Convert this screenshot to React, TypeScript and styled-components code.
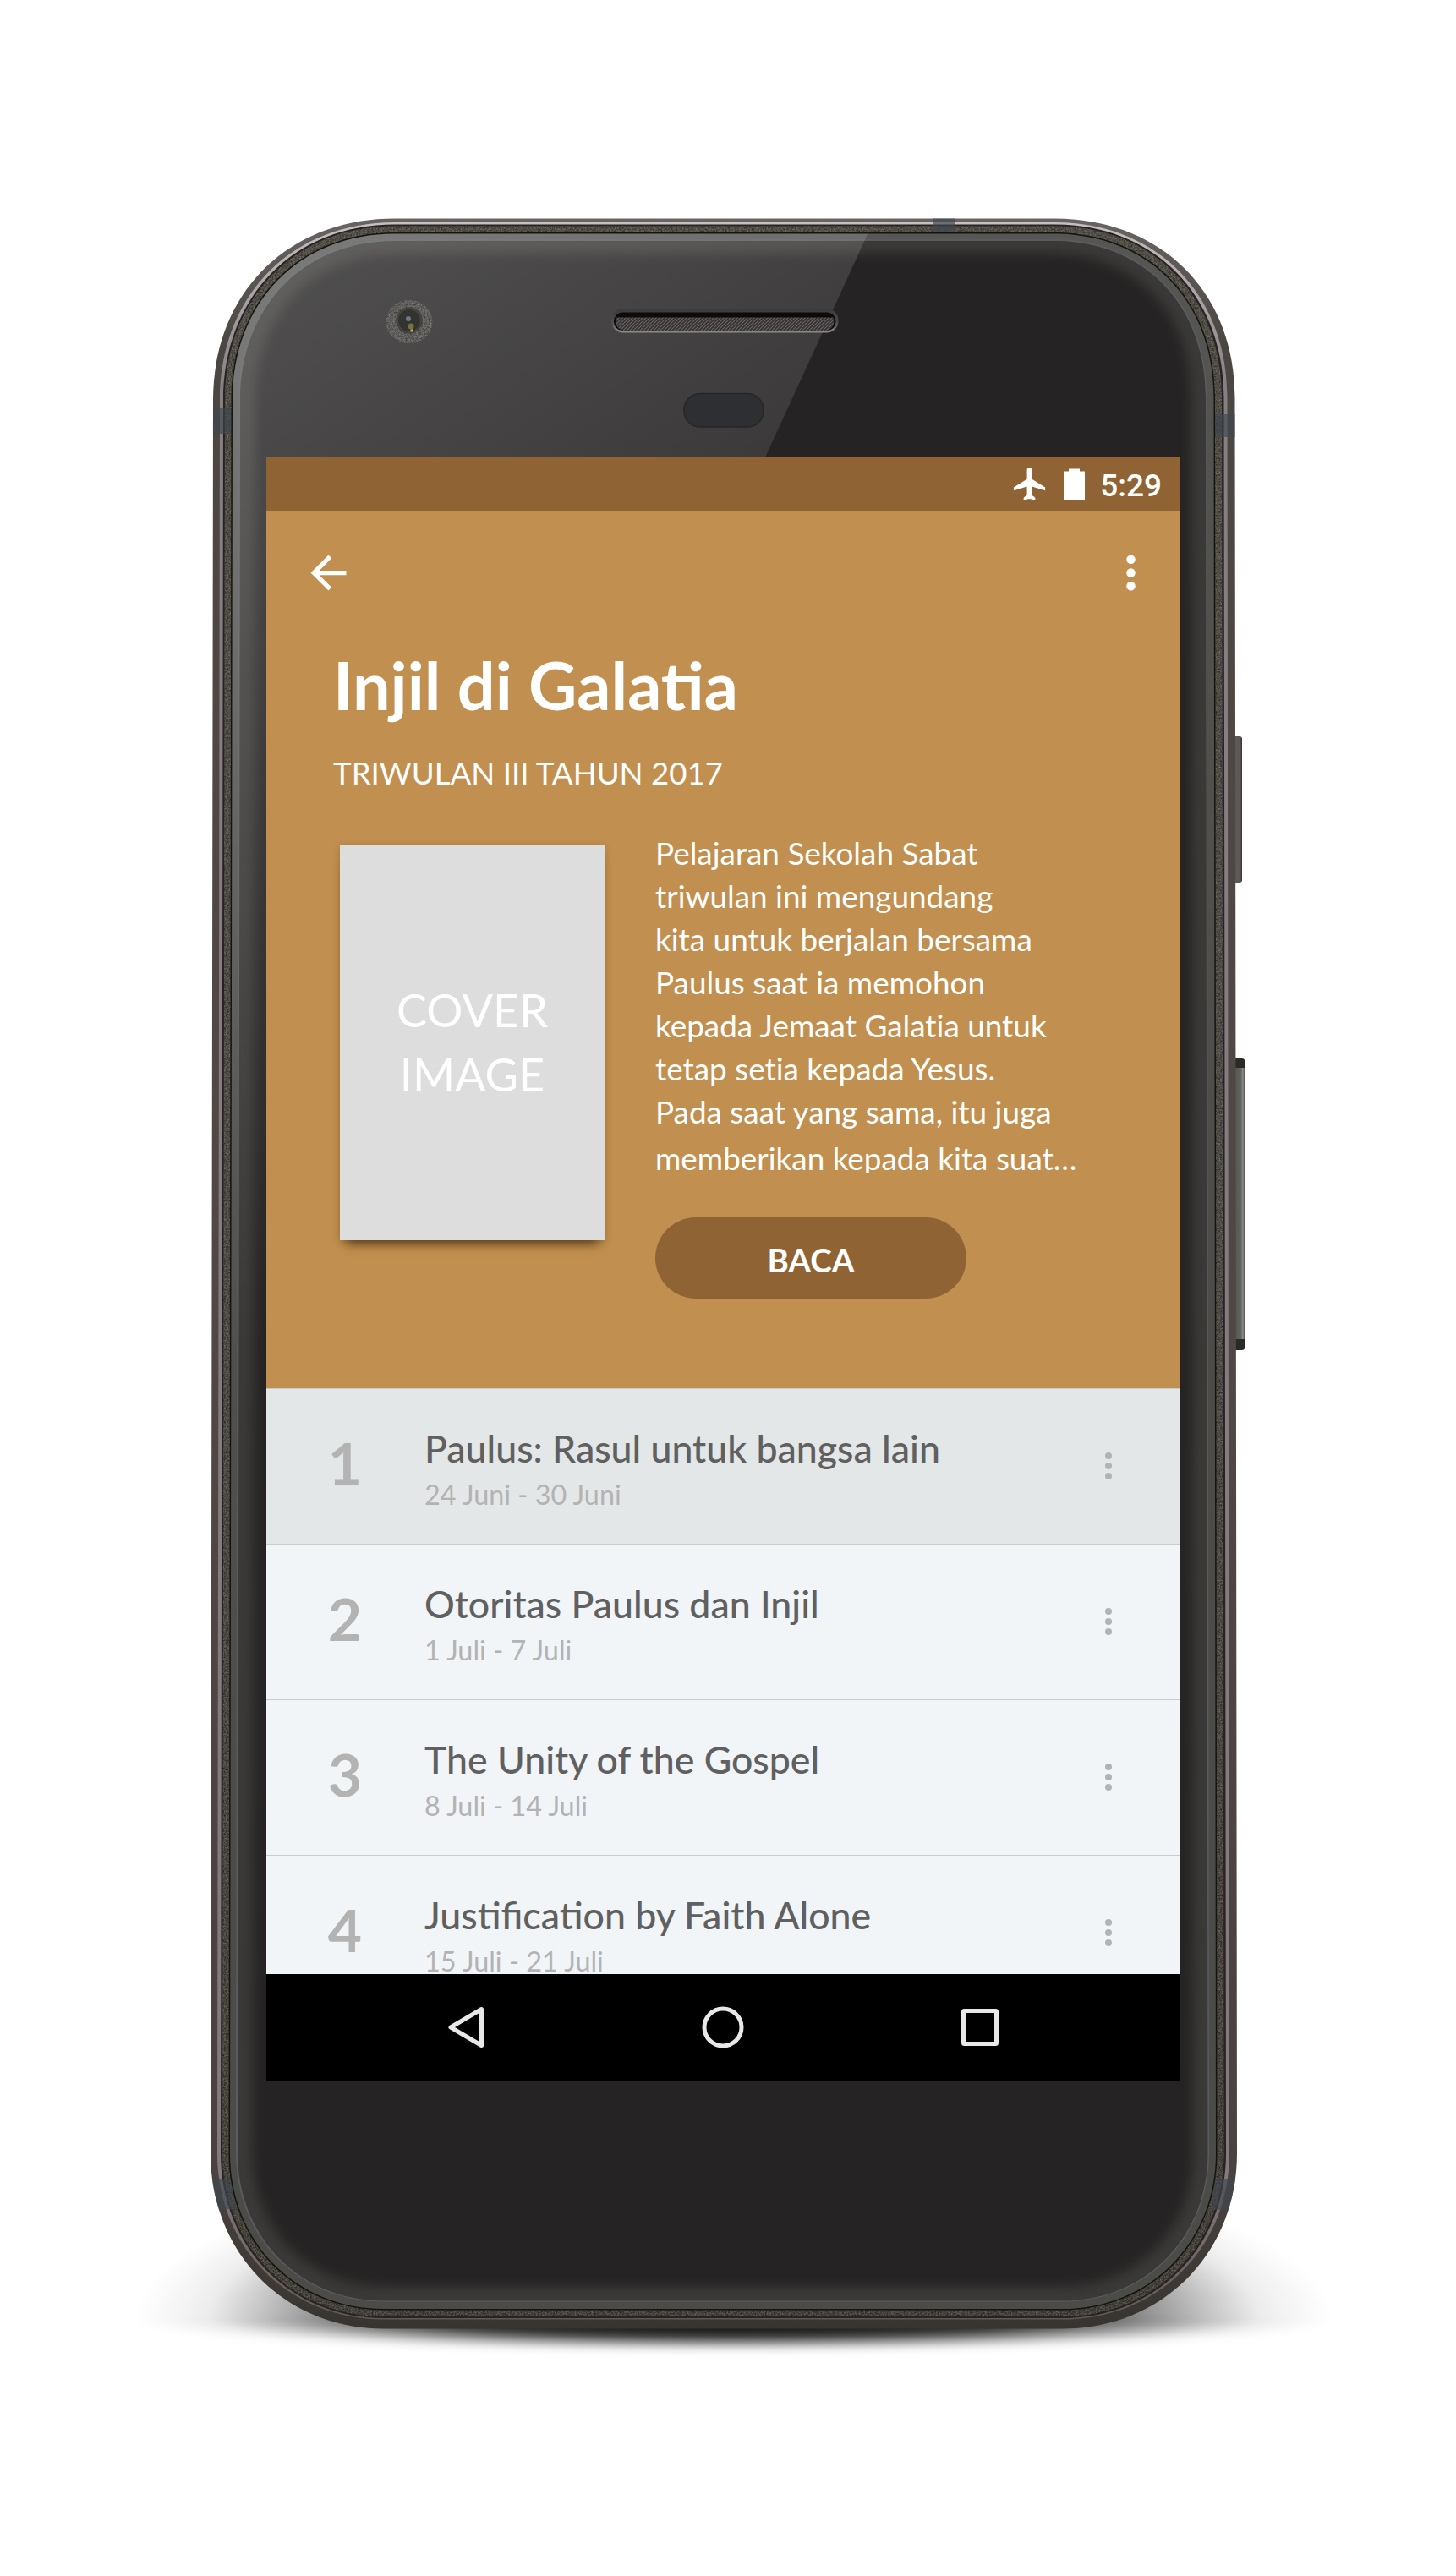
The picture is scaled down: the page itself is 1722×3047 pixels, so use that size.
import React from "react";
import styled, { createGlobalStyle } from "styled-components";

const GlobalStyle = createGlobalStyle`
  body {
    margin: 0;
    background: #ffffff;
  }
`;

const brand = {
  primary: "#c18f4f",
  dark: "#8f6334",
  row: "#f1f5f8",
  rowActive: "#e3e7e7",
  line: "#c9cccd",
  ink: "#606060",
  muted: "#b3b3b3",
};

/* ---------- Page and device ---------- */

const Page = styled.main`
  display: grid;
  width: 1722px;
  height: 3047px;
  overflow: hidden;
  background: #ffffff;
  font-family: Lato, "Liberation Sans", sans-serif;
`;

const DeviceSvg = styled.svg`
  grid-area: 1 / 1;
  display: block;
  width: 1722px;
  height: 3047px;
`;

const Screen = styled.section`
  grid-area: 1 / 1;
  z-index: 1;
  display: flex;
  flex-direction: column;
  width: 1080px;
  height: 1920px;
  margin: 541px 0 0 315px;
  overflow: hidden;
  background: ${brand.row};
`;

/* ---------- Status bar ---------- */

const StatusBar = styled.div`
  box-sizing: border-box;
  flex: none;
  display: flex;
  align-items: center;
  justify-content: flex-end;
  height: 63px;
  padding-right: 21px;
  background: ${brand.dark};
  color: #ffffff;
`;

const StatusIcon = styled.svg<{ $gap: number }>`
  display: block;
  flex: none;
  margin-right: ${(p) => p.$gap}px;
  fill: #ffffff;
`;

const Clock = styled.span`
  font: 500 37px/40px Roboto, sans-serif;
  padding-top: 4px;
`;

/* ---------- Header ---------- */

const Header = styled.header`
  box-sizing: border-box;
  flex: none;
  height: 1038px;
  background: ${brand.primary};
  color: #ffffff;
`;

const Toolbar = styled.div`
  display: flex;
  align-items: center;
  justify-content: space-between;
  height: 147px;
  padding: 0 26px 0 42px;
`;

const Glyph = styled.svg<{ $size: number }>`
  display: block;
  flex: none;
  width: ${(p) => p.$size}px;
  height: ${(p) => p.$size}px;
  fill: currentColor;
`;

const Title = styled.h1`
  margin: 11px 0 0 79px;
  font-size: 79.2px;
  line-height: 95px;
  font-weight: 700;
`;

const Quarter = styled.p`
  margin: 35px 0 0 79px;
  font-size: 36.65px;
  line-height: 44px;
`;

const Intro = styled.div`
  display: flex;
  align-items: flex-start;
  margin-top: 48px;
  padding-left: 87px;
`;

const Cover = styled.div`
  flex: none;
  display: flex;
  flex-direction: column;
  align-items: center;
  justify-content: center;
  width: 313px;
  height: 468px;
  margin: 15px 60px 0 0;
  background: #dddddd;
  font-size: 54px;
  line-height: 76px;
  box-shadow: 0 12px 12px -8px rgba(60, 35, 5, 0.75), 0 2px 8px rgba(60, 35, 5, 0.22);
`;

const Details = styled.div`
  display: flex;
  flex-direction: column;
  align-items: flex-start;
`;

const Description = styled.div`
  height: 404px;
  overflow: hidden;
  white-space: nowrap;
  font-size: 36.9px;
  font-variant-ligatures: none;
`;

const Line = styled.div<{ $last?: boolean }>`
  line-height: ${(p) => (p.$last ? 59 : 51)}px;
`;

const ReadButton = styled.button`
  width: 368px;
  height: 96px;
  margin: 52px 0 0;
  padding: 3px 0 0;
  border: 0;
  border-radius: 48px;
  background: ${brand.dark};
  color: #ffffff;
  font: 700 38.6px/46px Lato, sans-serif;
`;

/* ---------- Lessons ---------- */

const Lessons = styled.ul`
  flex: 1;
  min-height: 0;
  margin: 0;
  padding: 0;
  overflow: hidden;
  list-style: none;
`;

const Lesson = styled.li<{ $active: boolean }>`
  box-sizing: border-box;
  display: flex;
  align-items: flex-start;
  height: 184px;
  padding: 0 60px 0 43px;
  border-top: 1px solid ${brand.line};
  background: ${(p) => (p.$active ? brand.rowActive : brand.row)};
`;

const LessonNumber = styled.span`
  width: 100px;
  margin: 47px 44px 0 0;
  color: ${brand.muted};
  font-size: 69.5px;
  line-height: 80px;
  font-weight: 700;
  text-align: center;
`;

const LessonText = styled.div`
  flex: 1;
  display: flex;
  flex-direction: column;
  gap: 10px;
  padding-top: 44px;
`;

const LessonTitle = styled.span`
  color: ${brand.ink};
  font-size: 44.65px;
  line-height: 52px;
  font-weight: 500;
`;

const LessonDate = styled.span`
  color: ${brand.muted};
  font-size: 32.4px;
  line-height: 38px;
`;

const LessonMenu = styled.span`
  margin-top: 67px;
  color: ${brand.muted};
`;

/* ---------- Navigation bar ---------- */

const NavBar = styled.nav`
  flex: none;
  display: flex;
  align-items: center;
  justify-content: center;
  gap: 240px;
  height: 126px;
  background: #000000;
`;

const NavIcon = styled.svg`
  display: block;
  width: 64px;
  height: 64px;
  fill: none;
  stroke: #e8e8e8;
  stroke-width: 5;
  stroke-linejoin: round;
`;

/* ---------- Device drawing ---------- */

type Insets = [left: number, top: number, right: number, bottom: number];

/* Closed outline of the body, pulled in by a distance on each side. */
function outline([l, t, r, b]: Insets): string {
  const k = 0.41;
  const top = 258.5 + t;
  const bottom = 2754.5 - b;
  const lt = 252 + l;
  const lb = 249 + l;
  const rt = 1460.5 - r;
  const rb = 1463 - r;
  const tl = { x: 467, y: 474 };
  const tr = { x: 1247, y: 470 };
  const br = { x: 1257, y: 2547 };
  const bl = { x: 454, y: 2547 };
  return [
    `M${tl.x} ${top} H${tr.x}`,
    `C${rt - (rt - tr.x) * k} ${top} ${rt} ${top + (tr.y - top) * k} ${rt} ${tr.y}`,
    `L${rb} ${br.y}`,
    `C${rb} ${bottom - (bottom - br.y) * 0.43} ${rb - (rb - br.x) * 0.43} ${bottom} ${br.x} ${bottom}`,
    `H${bl.x}`,
    `C${lb + (bl.x - lb) * 0.43} ${bottom} ${lb} ${bottom - (bottom - bl.y) * 0.43} ${lb} ${bl.y}`,
    `L${lt} ${tl.y}`,
    `C${lt} ${top + (tl.y - top) * k} ${lt + (tl.x - lt) * k} ${top} ${tl.x} ${top}Z`,
  ].join(" ");
}

const ring = {
  body: outline([0, 0, 0, 0]),
  shine: outline([8, 4.5, 9, 11]),
  shineEnd: outline([12, 7, 13, 12.5]),
  grain: outline([14, 9, 15.5, 14.5]),
  groove: outline([21.5, 16.5, 23.5, 22]),
  bezel: outline([23, 18, 25, 23.5]),
  bezelLine: outline([30, 24.5, 33, 32]),
  glass: outline([32, 26.5, 34.5, 33]),
  flat: outline([50, 42, 52, 50]),
};

const bands = [
  { x: 250, y: 483, w: 24, h: 30 },
  { x: 1436, y: 490, w: 27, h: 27 },
  { x: 1103, y: 256, w: 27, h: 19 },
  { x: 246, y: 2578, w: 34, h: 35 },
  { x: 1434, y: 2578, w: 34, h: 36 },
];

function Device() {
  return (
    <DeviceSvg viewBox="0 0 1722 3047" aria-hidden="true">
      <defs>
        <linearGradient id="metal" x1="0" y1="258" x2="0" y2="2755" gradientUnits="userSpaceOnUse">
          <stop offset="0" stopColor="#696461" />
          <stop offset="0.06" stopColor="#4c4643" />
          <stop offset="0.5" stopColor="#504845" />
          <stop offset="0.93" stopColor="#4a4240" />
          <stop offset="1" stopColor="#37342f" />
        </linearGradient>
        <linearGradient id="shine" x1="0" y1="258" x2="0" y2="2755" gradientUnits="userSpaceOnUse">
          <stop offset="0" stopColor="#c4c4c4" />
          <stop offset="0.08" stopColor="#858082" />
          <stop offset="0.93" stopColor="#827a7e" />
          <stop offset="1" stopColor="#5b5753" />
        </linearGradient>
        <linearGradient id="grainFill" x1="0" y1="258" x2="0" y2="2755" gradientUnits="userSpaceOnUse">
          <stop offset="0" stopColor="#524f47" />
          <stop offset="0.5" stopColor="#4c4a44" />
          <stop offset="1" stopColor="#3d3a34" />
        </linearGradient>
        <linearGradient id="bezelFill" x1="252" y1="258" x2="1100" y2="1800" gradientUnits="userSpaceOnUse">
          <stop offset="0" stopColor="#5a5a58" />
          <stop offset="1" stopColor="#4b4b47" />
        </linearGradient>
        <linearGradient id="reflection" x1="275" y1="415" x2="825" y2="1245" gradientUnits="userSpaceOnUse">
          <stop offset="0" stopColor="#ffffff" stopOpacity="0.19" />
          <stop offset="1" stopColor="#ffffff" stopOpacity="0" />
        </linearGradient>
        <linearGradient id="speaker" x1="0" y1="365" x2="0" y2="393" gradientUnits="userSpaceOnUse">
          <stop offset="0" stopColor="#3a393b" />
          <stop offset="0.6" stopColor="#4d4d52" />
          <stop offset="1" stopColor="#8a8a8c" />
        </linearGradient>
        <linearGradient id="key" x1="0" y1="0" x2="1" y2="0">
          <stop offset="0" stopColor="#4f4f49" />
          <stop offset="0.72" stopColor="#62635c" />
          <stop offset="0.84" stopColor="#8d8d8b" />
          <stop offset="1" stopColor="#4b4846" />
        </linearGradient>
        <radialGradient id="shadow">
          <stop offset="0" stopColor="#000" stopOpacity="0.95" />
          <stop offset="0.48" stopColor="#000" stopOpacity="0.82" />
          <stop offset="0.6" stopColor="#000" stopOpacity="0.6" />
          <stop offset="0.78" stopColor="#000" stopOpacity="0.25" />
          <stop offset="0.88" stopColor="#000" stopOpacity="0.07" />
          <stop offset="1" stopColor="#000" stopOpacity="0" />
        </radialGradient>
        <pattern id="mesh" width="4" height="4" patternUnits="userSpaceOnUse">
          <rect width="4" height="4" fill="#353131" />
          <path d="M-1 5L5 -1M-1 1L1 -1M3 5L5 3" stroke="#6a6566" strokeWidth="1.1" />
        </pattern>
        <filter id="soft" x="-10%" y="-10%" width="120%" height="120%" colorInterpolationFilters="sRGB">
          <feGaussianBlur stdDeviation="7" />
        </filter>
        <filter id="shadowBlur" x="-10%" y="-30%" width="120%" height="160%">
          <feGaussianBlur stdDeviation="5" />
        </filter>
        <filter id="noise" x="0" y="0" width="100%" height="100%" colorInterpolationFilters="sRGB">
          <feTurbulence type="fractalNoise" baseFrequency="0.55" numOctaves="2" seed="4" />
          <feColorMatrix values="0.9 0 0 0 -0.14  0.9 0 0 0 -0.15  0.9 0 0 0 -0.18  0 0 0 0 0.45" />
          <feComposite in2="SourceGraphic" operator="in" result="speckle" />
          <feMerge>
            <feMergeNode in="SourceGraphic" />
            <feMergeNode in="speckle" />
          </feMerge>
        </filter>
        <clipPath id="glassClip">
          <path d={ring.bezel} />
        </clipPath>
        <clipPath id="frameClip">
          <path d={ring.body} />
        </clipPath>
        <clipPath id="shadowTop">
          <rect x="100" y="2540" width="1540" height="205" />
        </clipPath>
      </defs>

      <g filter="url(#shadowBlur)">
        <g clipPath="url(#shadowTop)">
          <ellipse cx="868" cy="2745" rx="708" ry="200" fill="url(#shadow)" />
        </g>
        <svg x="160" y="2744" width="1416" height="45" viewBox="0 36 1416 45" preserveAspectRatio="none">
          <ellipse cx="708" cy="36" rx="708" ry="39" fill="url(#shadow)" />
        </svg>
      </g>

      <rect x="1455" y="871" width="14" height="173" rx="3" fill="#5d5956" />
      <rect x="1467.5" y="873" width="1.5" height="169" fill="#423a3b" />
      <rect x="1455" y="1252" width="17.5" height="345" rx="4" fill="#2b2a27" />
      <rect x="1455" y="1263" width="17.5" height="321" fill="url(#key)" />

      <path d={ring.body} fill="url(#metal)" />
      <path d={ring.shine} fill="url(#shine)" />
      <path d={ring.shineEnd} fill="#2c2122" />
      <path d={ring.grain} fill="url(#grainFill)" filter="url(#noise)" />
      <g clipPath="url(#frameClip)">
        {bands.map((b) => (
          <rect key={`${b.x}-${b.y}`} x={b.x} y={b.y} width={b.w} height={b.h} fill="#3f474e" fillOpacity="0.65" />
        ))}
      </g>
      <path d={ring.groove} fill="#141310" />
      <path d={ring.bezel} fill="url(#bezelFill)" />
      <path d={ring.bezelLine} fill="#5b5c60" />
      <path d={ring.glass} fill="#3b3a38" />
      <g clipPath="url(#glassClip)">
        <path d={ring.flat} fill="#252323" filter="url(#soft)" />
        <path d="M200 258H1034.7L283 1898H200Z" fill="url(#reflection)" />
      </g>

      <ellipse cx="484" cy="380.5" rx="27.5" ry="25.5" fill="#6c6c6d" filter="url(#noise)" />
      <circle cx="484" cy="379" r="15.5" fill="#33332f" />
      <circle cx="484" cy="379" r="14" fill="none" stroke="#484843" strokeWidth="2" />
      <circle cx="483" cy="377" r="3" fill="#6d7694" />
      <circle cx="486" cy="386" r="3.5" fill="#76733a" />
      <circle cx="487" cy="391" r="1.8" fill="#c3a86a" />

      <rect x="723" y="365" width="268.5" height="28.5" rx="14" fill="url(#speaker)" />
      <rect x="726" y="369.5" width="262.5" height="21.5" rx="10.5" fill="#0d0a09" />
      <path d="M729 375.5H985.5C988 381 985 390.5 977 391H738C730 390.5 726 381 729 375.5Z" fill="url(#mesh)" />

      <rect x="809" y="465.5" width="94" height="39.5" rx="19" fill="#2e2f32" stroke="#272625" strokeWidth="1.5" />
    </DeviceSvg>
  );
}

/* ---------- Content ---------- */

const description = [
  "Pelajaran Sekolah Sabat",
  "triwulan ini mengundang",
  "kita untuk berjalan bersama",
  "Paulus saat ia memohon",
  "kepada Jemaat Galatia untuk",
  "tetap setia kepada Yesus.",
  "Pada saat yang sama, itu juga",
  "memberikan kepada kita suat…",
];

const lessons = [
  { title: "Paulus: Rasul untuk bangsa lain", date: "24 Juni - 30 Juni" },
  { title: "Otoritas Paulus dan Injil", date: "1 Juli - 7 Juli" },
  { title: "The Unity of the Gospel", date: "8 Juli - 14 Juli" },
  { title: "Justification by Faith Alone", date: "15 Juli - 21 Juli" },
];

function MoreIcon({ size }: { size: number }) {
  return (
    <Glyph $size={size} viewBox="0 0 24 24">
      <circle cx="12" cy="6" r="2" />
      <circle cx="12" cy="12" r="2" />
      <circle cx="12" cy="18" r="2" />
    </Glyph>
  );
}

export default function App() {
  return (
    <Page>
      <GlobalStyle />
      <Device />
      <Screen>
        <StatusBar>
          <StatusIcon $gap={16} width="47" height="47" viewBox="0 0 24 24">
            <path d="M21 16v-2l-8-5V3.5c0-.83-.67-1.5-1.5-1.5S10 2.67 10 3.5V9l-8 5v2l8-2.5V18.6c-.1.7-1.7.8-2 1.9V22c1-.7 2.2-1 3.5-1s2.5.3 3.5 1v-1.5c-.3-1.1-1.9-1.2-2-1.9V13.5l8 2.5z" />
          </StatusIcon>
          <StatusIcon $gap={18} width="25" height="38" viewBox="0 0 25 38">
            <path d="M0 3.5H6V0.5H19V3.5H25V37.5H0Z" />
          </StatusIcon>
          <Clock>5:29</Clock>
        </StatusBar>

        <Header>
          <Toolbar>
            <Glyph $size={63} viewBox="0 0 24 24">
              <path d="M20 11H7.83l5.59-5.59L12 4l-8 8 8 8 1.41-1.41L7.83 13H20v-2z" />
            </Glyph>
            <MoreIcon size={63} />
          </Toolbar>
          <Title>Injil di Galatia</Title>
          <Quarter>TRIWULAN III TAHUN 2017</Quarter>
          <Intro>
            <Cover>
              <span>COVER</span>
              <span>IMAGE</span>
            </Cover>
            <Details>
              <Description>
                {description.map((text, i) => (
                  <Line key={text} $last={i === description.length - 1}>
                    {text}
                  </Line>
                ))}
              </Description>
              <ReadButton>BACA</ReadButton>
            </Details>
          </Intro>
        </Header>

        <Lessons>
          {lessons.map((lesson, i) => (
            <Lesson key={lesson.title} $active={i === 0}>
              <LessonNumber>{i + 1}</LessonNumber>
              <LessonText>
                <LessonTitle>{lesson.title}</LessonTitle>
                <LessonDate>{lesson.date}</LessonDate>
              </LessonText>
              <LessonMenu>
                <MoreIcon size={48} />
              </LessonMenu>
            </Lesson>
          ))}
        </Lessons>

        <NavBar>
          <NavIcon viewBox="0 0 64 64">
            <path d="M50.5 10.5V53.5L14 32Z" />
          </NavIcon>
          <NavIcon viewBox="0 0 64 64">
            <circle cx="32" cy="32" r="22" />
          </NavIcon>
          <NavIcon viewBox="0 0 64 64">
            <rect x="12.5" y="12.5" width="39" height="39" rx="1" />
          </NavIcon>
        </NavBar>
      </Screen>
    </Page>
  );
}
